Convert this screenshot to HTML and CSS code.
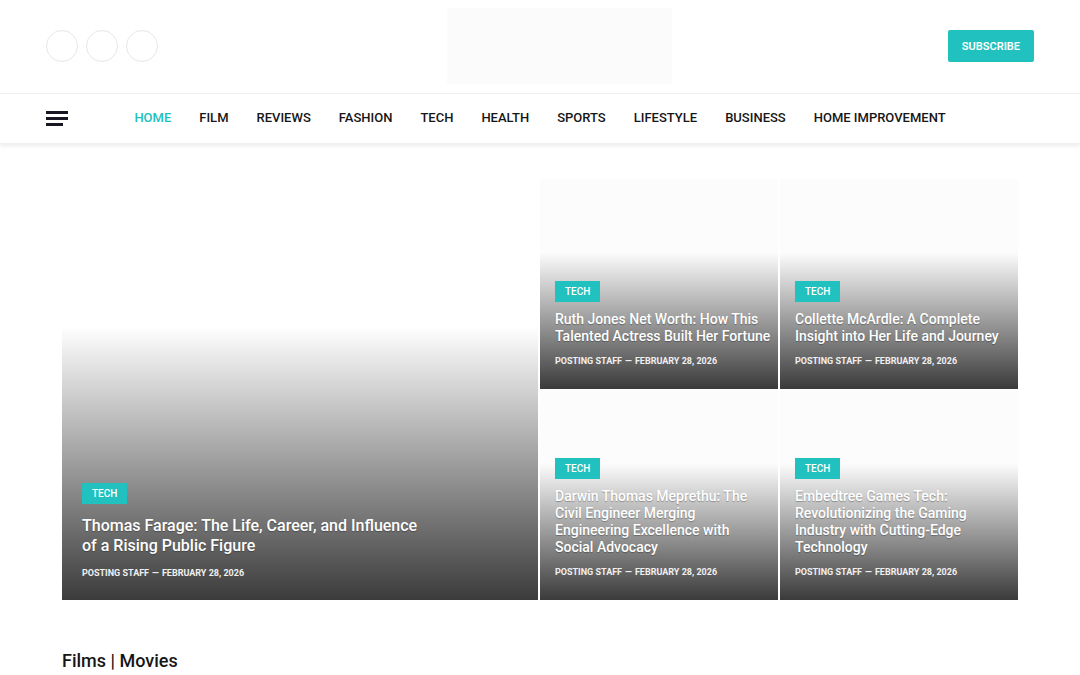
FILE: index.html
```html
<!DOCTYPE html>
<html lang="en">
<head>
  <meta charset="UTF-8" />
  <meta name="viewport" content="width=device-width, initial-scale=1.0"/>
  <title>Home</title>
  <link rel="stylesheet" href="styles.css">
</head>
<body>
  <header class="site-header">
    <div class="top-bar">
      <div class="social">
        <a href="#" aria-label="Facebook"></a>
        <a href="#" aria-label="Twitter"></a>
        <a href="#" aria-label="Instagram"></a>
      </div>
      <a class="logo" href="#" aria-label="Home"></a>
      <button class="subscribe" type="button">SUBSCRIBE</button>
    </div>

    <div class="nav-bar">
      <button class="menu-toggle" type="button" aria-label="Menu">
        <span></span><span></span><span></span>
      </button>
      <nav class="main-nav">
        <a class="active" href="#">HOME</a>
        <a href="#">FILM</a>
        <a href="#">REVIEWS</a>
        <a href="#">FASHION</a>
        <a href="#">TECH</a>
        <a href="#">HEALTH</a>
        <a href="#">SPORTS</a>
        <a href="#">LIFESTYLE</a>
        <a href="#">BUSINESS</a>
        <a href="#">HOME IMPROVEMENT</a>
      </nav>
    </div>
  </header>

  <main class="container">
    <section class="featured">
      <article class="card card-large">
        <a class="tag" href="#">TECH</a>
        <h2><a href="#">Thomas Farage: The Life, Career, and Influence of a Rising Public Figure</a></h2>
        <p class="meta"><a href="#">POSTING STAFF</a><span>—</span><time datetime="2026-02-28">FEBRUARY 28, 2026</time></p>
      </article>

      <article class="card">
        <a class="tag" href="#">TECH</a>
        <h2><a href="#">Ruth Jones Net Worth: How This Talented Actress Built Her Fortune</a></h2>
        <p class="meta"><a href="#">POSTING STAFF</a><span>—</span><time datetime="2026-02-28">FEBRUARY 28, 2026</time></p>
      </article>

      <article class="card">
        <a class="tag" href="#">TECH</a>
        <h2><a href="#">Collette McArdle: A Complete Insight into Her Life and Journey</a></h2>
        <p class="meta"><a href="#">POSTING STAFF</a><span>—</span><time datetime="2026-02-28">FEBRUARY 28, 2026</time></p>
      </article>

      <article class="card">
        <a class="tag" href="#">TECH</a>
        <h2><a href="#">Darwin Thomas Meprethu: The Civil Engineer Merging Engineering Excellence with Social Advocacy</a></h2>
        <p class="meta"><a href="#">POSTING STAFF</a><span>—</span><time datetime="2026-02-28">FEBRUARY 28, 2026</time></p>
      </article>

      <article class="card">
        <a class="tag" href="#">TECH</a>
        <h2><a href="#">Embedtree Games Tech: Revolutionizing the Gaming Industry with Cutting-Edge Technology</a></h2>
        <p class="meta"><a href="#">POSTING STAFF</a><span>—</span><time datetime="2026-02-28">FEBRUARY 28, 2026</time></p>
      </article>
    </section>

    <h3 class="section-title">Films | Movies</h3>
  </main>
</body>
</html>
```
FILE: styles.css
```css
* {
  box-sizing: border-box;
}
body {
  margin: 0;
  font-family: Roboto, Arial, sans-serif;
  background: #fff;
  color: #161616;
}
a {
  color: inherit;
  text-decoration: none;
}
button {
  font-family: inherit;
  border: none;
  cursor: pointer;
}

/* Header */
.site-header {
  border-bottom: 1px solid #efefef;
  box-shadow: 0 2px 4px rgba(0,0,0,0.08);
}
.top-bar {
  display: flex;
  justify-content: space-between;
  align-items: center;
  padding: 8px 46px 9px;
}
.social {
  display: flex;
  gap: 8px;
  margin-right: 14px;
}
.social a {
  width: 32px;
  height: 32px;
  border: 1px solid #e8e8e8;
  border-radius: 50%;
}
.logo {
  width: 225px;
  height: 76px;
  background: #fbfbfb;
}
.subscribe {
  height: 32px;
  padding: 0 14px;
  background: #20c1be;
  color: #fff;
  font-size: 11px;
  font-weight: 600;
  border-radius: 2px;
}
.nav-bar {
  display: grid;
  grid-template-columns: 1fr auto 1fr;
  align-items: center;
  height: 50px;
  padding: 0 46px;
  border-top: 1px solid #efefef;
}
.menu-toggle {
  display: flex;
  flex-direction: column;
  gap: 3px;
  width: 22px;
  padding: 0;
  background: none;
}
.menu-toggle span {
  height: 3px;
  background: #1b1722;
}
.menu-toggle span:last-child {
  width: 17px;
}
.main-nav {
  display: flex;
  gap: 28px;
  padding-bottom: 2px;
  font-size: 13px;
  font-weight: 500;
  line-height: 18px;
}
.main-nav .active {
  color: #20c1be;
}

/* Featured grid */
.container {
  padding: 35px 62px 0;
}
.featured {
  display: grid;
  grid-template-columns: 2fr 1fr 1fr;
  grid-auto-rows: minmax(210px, auto);
  gap: 1px 2px;
}
.card {
  display: flex;
  flex-direction: column;
  align-items: flex-start;
  justify-content: flex-end;
  padding: 15px 6px 22px 15px;
  background: linear-gradient(to bottom, transparent 35%, rgba(0,0,0,0.77)) #fcfcfc;
  color: #fff;
}
.card-large {
  grid-row: span 2;
  padding: 20px 20px 21px;
  background-color: #fff;
}
.tag {
  padding: 0 10px;
  background: #20c1be;
  font-size: 10px;
  font-weight: 500;
  line-height: 21px;
}
.card h2 {
  max-width: 216px;
  margin: 9px 0 10px;
  font-size: 14px;
  font-weight: 500;
  line-height: 17px;
  text-shadow: 0 1px 1px rgba(0,0,0,0.3);
}
.card-large h2 {
  max-width: 350px;
  margin: 12px 0 11px;
  font-size: 16px;
  line-height: 20px;
}
.meta {
  display: flex;
  gap: 3px;
  margin: 0;
  color: #f0f0f0;
  font-size: 9px;
  font-weight: 700;
  line-height: 12px;
}
.section-title {
  margin: 49px 0 0;
  font-size: 18px;
  font-weight: 500;
  line-height: 24px;
}
```
